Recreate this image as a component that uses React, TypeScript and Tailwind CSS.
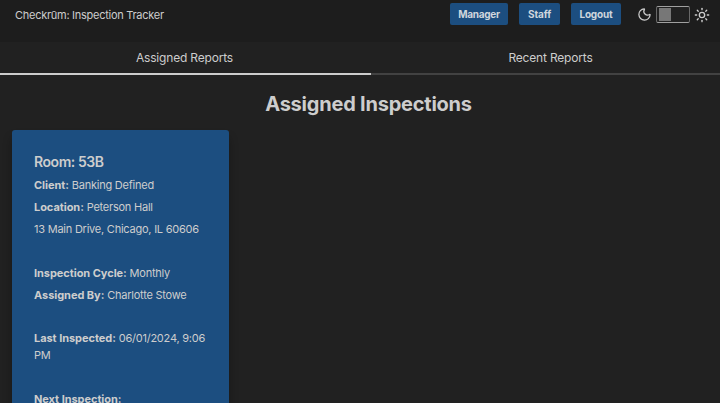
import type { ReactNode } from "react";
import { Moon, Sun } from "lucide-react";

function NavButton({ children, className }: { children: ReactNode; className: string }) {
  return (
    <button
      className={`h-[22px] shrink-0 rounded-[2px] bg-[#1c4e80] text-center text-[10px] leading-[23px] font-bold whitespace-nowrap text-[#cfd6dd] ${className}`}
    >
      {children}
    </button>
  );
}

function Field({ label, children, className = "" }: { label: string; children?: ReactNode; className?: string }) {
  return (
    <p className={`leading-[17px] ${className}`}>
      <strong className="font-bold tracking-[-0.05px]">{label}</strong> {children}
    </p>
  );
}

export default function App() {
  return (
    <div className="h-[403px] w-[720px] overflow-hidden bg-[#212121] font-['Inter',sans-serif] text-[#cdcdcd]">
      <header className="flex h-[42px] items-start bg-[#1d1d1d] pt-[3px] pl-[15px]">
        <div className="w-[435px] text-[11px] leading-[24px] tracking-[-0.27px]">Checkrūm: Inspection Tracker</div>
        <nav className="flex gap-[11px]">
          <NavButton className="w-[58px] tracking-[-0.3px]">Manager</NavButton>
          <NavButton className="w-[41px] tracking-[-0.1px]">Staff</NavButton>
          <NavButton className="w-[50px] tracking-[-0.15px]">Logout</NavButton>
        </nav>
        <div className="mt-[3px] ml-[16px] flex items-center">
          <Moon className="size-[15px] shrink-0" strokeWidth={2} />
          <div className="mr-[4px] ml-[4px] h-[17px] w-[34px] shrink-0 rounded-[2px] border border-x-[#686868] border-y-[#a0a0a0] bg-[#212121] py-px pl-[2px]">
            <div className="h-full w-3 bg-[#777777]" />
          </div>
          <Sun className="size-4 shrink-0" strokeWidth={2} />
        </div>
      </header>
      <div className="flex h-[33px] text-center text-[12px] leading-[32px] tracking-[-0.18px]">
        <div className="w-[371px] border-b-2 border-[#cccccc] pr-[2px]">Assigned Reports</div>
        <div className="w-[349px] border-b-2 border-[#424242] pl-[10px]">Recent Reports</div>
      </div>
      <h1 className="w-[737px] pt-[15px] text-center text-[20px] leading-[28px] font-bold tracking-[-0.22px]">Assigned Inspections</h1>
      <section className="mt-[12px] ml-[12px] h-[300px] w-[217px] rounded-[3px] bg-[#1c4e80] px-[22px] pt-[22px] text-[11px] tracking-[-0.23px] shadow-[0_8px_10px_rgba(0,0,0,0.3)]">
        <h2 className="text-[14px] leading-[20px] font-semibold tracking-[-0.45px]">Room: 53B</h2>
        <Field label="Client:" className="mt-[5px]">Banking Defined</Field>
        <Field label="Location:" className="mt-[5px]">Peterson Hall</Field>
        <p className="mt-[5px] leading-[17px]">13 Main Drive, Chicago, IL 60606</p>
        <Field label="Inspection Cycle:" className="mt-[27px]">Monthly</Field>
        <Field label="Assigned By:" className="mt-[5px]">Charlotte Stowe</Field>
        <Field label="Last Inspected:" className="mt-[26px]">06/01/2024, 9:06 PM</Field>
        <Field label="Next Inspection:" className="mt-[27px]" />
      </section>
    </div>
  );
}
